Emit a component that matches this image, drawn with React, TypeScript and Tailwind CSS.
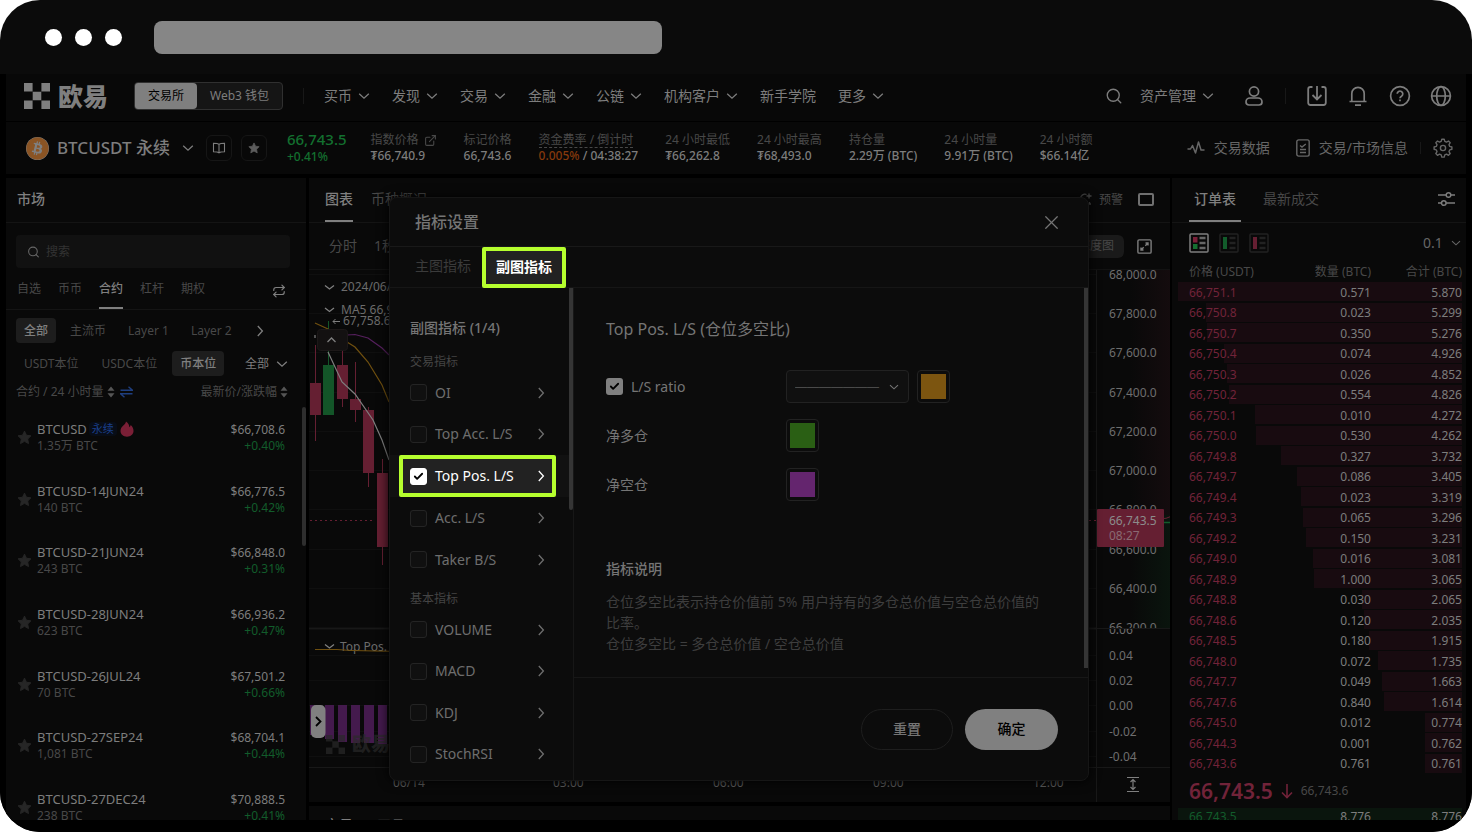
import React from "react";
import { Search, X, Repeat, Check, ExternalLink } from "lucide-react";
import { FaBitcoin } from "react-icons/fa";

const FONT = "font-['Noto_Sans','Noto_Sans_CJK_SC',sans-serif]";

const NAV = [
  { label: "买币", menu: true },
  { label: "发现", menu: true },
  { label: "交易", menu: true },
  { label: "金融", menu: true },
  { label: "公链", menu: true },
  { label: "机构客户", menu: true },
  { label: "新手学院", menu: false },
  { label: "更多", menu: true },
];

const STATS = [
  { label: "标记价格", value: "66,743.6" },
  { label: "资金费率 / 倒计时", value: "04:38:27", rate: "0.005%" },
  { label: "24 小时最低", value: "₮66,262.8" },
  { label: "24 小时最高", value: "₮68,493.0" },
  { label: "持仓量", value: "2.29万 (BTC)" },
  { label: "24 小时量", value: "9.91万 (BTC)" },
  { label: "24 小时额", value: "$66.14亿" },
];

const MARKETS = [
  { name: "BTCUSD", volume: "1.35万 BTC", price: "$66,708.6", change: "+0.40%", hot: true },
  { name: "BTCUSD-14JUN24", volume: "140 BTC", price: "$66,776.5", change: "+0.42%" },
  { name: "BTCUSD-21JUN24", volume: "243 BTC", price: "$66,848.0", change: "+0.31%" },
  { name: "BTCUSD-28JUN24", volume: "623 BTC", price: "$66,936.2", change: "+0.47%" },
  { name: "BTCUSD-26JUL24", volume: "70 BTC", price: "$67,501.2", change: "+0.66%" },
  { name: "BTCUSD-27SEP24", volume: "1,081 BTC", price: "$68,704.1", change: "+0.44%" },
  { name: "BTCUSD-27DEC24", volume: "238 BTC", price: "$70,888.5", change: "+0.41%" },
];

const ASKS: [string, string, string][] = [
  ["66,751.1", "0.571", "5.870"],
  ["66,750.8", "0.023", "5.299"],
  ["66,750.7", "0.350", "5.276"],
  ["66,750.4", "0.074", "4.926"],
  ["66,750.3", "0.026", "4.852"],
  ["66,750.2", "0.554", "4.826"],
  ["66,750.1", "0.010", "4.272"],
  ["66,750.0", "0.530", "4.262"],
  ["66,749.8", "0.327", "3.732"],
  ["66,749.7", "0.086", "3.405"],
  ["66,749.4", "0.023", "3.319"],
  ["66,749.3", "0.065", "3.296"],
  ["66,749.2", "0.150", "3.231"],
  ["66,749.0", "0.016", "3.081"],
  ["66,748.9", "1.000", "3.065"],
  ["66,748.8", "0.030", "2.065"],
  ["66,748.6", "0.120", "2.035"],
  ["66,748.5", "0.180", "1.915"],
  ["66,748.0", "0.072", "1.735"],
  ["66,747.7", "0.049", "1.663"],
  ["66,747.6", "0.840", "1.614"],
  ["66,745.0", "0.012", "0.774"],
  ["66,744.3", "0.001", "0.762"],
  ["66,743.6", "0.761", "0.761"],
];

const TRADE_INDICATORS = ["OI", "Top Acc. L/S", "Top Pos. L/S", "Acc. L/S", "Taker B/S"];
const BASIC_INDICATORS = ["VOLUME", "MACD", "KDJ", "StochRSI"];

function Down({ className }: { className: string }) {
  return (
    <svg viewBox="0 0 12 12" className={className} fill="none" stroke="currentColor" strokeWidth="1.3" aria-hidden="true">
      <path d="M1.200 3.800L6 8.200l4.800-4.400" />
    </svg>
  );
}

function Right({ className }: { className: string }) {
  return (
    <svg viewBox="0 0 12 12" className={className} fill="none" stroke="currentColor" strokeWidth="1.3" aria-hidden="true">
      <path d="M3.800 1L8.400 6l-4.600 5" />
    </svg>
  );
}

function LogoMark({ className }: { className: string }) {
  return (
    <svg viewBox="0 0 26 26" className={className} fill="currentColor" aria-hidden="true">
      <path d="M0 0h8.6v8.6H0zM17.4 0H26v8.6h-8.6zM8.7 8.7h8.6v8.6H8.7zM0 17.4h8.6V26H0zM17.4 17.4H26V26h-8.6z" />
    </svg>
  );
}

function Star({ className }: { className: string }) {
  return (
    <svg viewBox="0 0 16 16" className={className} fill="currentColor" stroke="currentColor" strokeLinejoin="round" strokeWidth="1" aria-hidden="true">
      <path d="M8 1.2l2.1 4.4 4.8.6-3.5 3.4.9 4.9L8 12.1l-4.3 2.400.9-4.900L1.100 6.200l4.800-.6z" />
    </svg>
  );
}

function SortArrows() {
  return (
    <svg viewBox="0 0 8 12" className="h-3 w-2" fill="#555" aria-hidden="true">
      <path d="M4 .5l3.5 4.3h-7zM4 11.5L.5 7.2h7z" />
    </svg>
  );
}

function BrowserBar() {
  return (
    <div className="flex h-[74px] shrink-0 items-center pl-[45px]">
      <div className="flex gap-[13px] pr-8">
        {[0, 1, 2].map((i) => (
          <span key={i} className="h-[17px] w-[17px] rounded-full bg-white" />
        ))}
      </div>
      <div className="h-[33px] w-[508px] rounded-lg bg-[#868686]" />
    </div>
  );
}

function TopNav() {
  return (
    <header className="flex h-[47px] shrink-0 items-center bg-[#080808] pr-[14px] pb-[3px] pl-[18px] text-sm text-[#7d7d7d]">
      <a href="#home" className="flex items-center gap-2 text-[#7f7f7f]">
        <LogoMark className="h-[26px] w-[26px]" />
        <span className="text-[25px] leading-[26px] font-black">欧易</span>
      </a>
      <div className="ml-[26px] flex h-[28px] w-[149px] overflow-hidden rounded border border-[#303030] bg-[#151515] text-xs">
        <button className="w-[62px] rounded-r-sm bg-[#7f7f7f] text-black">交易所</button>
        <button className="flex-1">Web3 钱包</button>
      </div>
      <span className="ml-5 h-4 w-px bg-[#181818]" />
      <nav className="ml-5 flex gap-[22px] whitespace-nowrap">
        {NAV.map((n) => (
          <a key={n.label} href="#nav" className="flex items-center gap-[6px] leading-5">
            {n.label}
            {n.menu && <Down className="h-3 w-3" />}
          </a>
        ))}
      </nav>
      <div className="ml-auto flex items-center whitespace-nowrap">
        <button aria-label="搜索">
          <Search className="h-[18px] w-[18px]" strokeWidth={1.8} />
        </button>
        <a href="#assets" className="ml-[17px] flex items-center gap-[6px]">
          资产管理 <Down className="h-3 w-3" />
        </a>
        <button aria-label="账户" className="ml-[30px]">
          <svg viewBox="0 0 20 22" className="h-[22px] w-5" fill="none" stroke="currentColor" strokeWidth="1.7">
            <circle cx="10" cy="6.5" r="4.6" />
            <path d="M6 13h8a4 4 0 0 1 4 4c0 2-1 3-3 3H5c-2 0-3-1-3-3a4 4 0 0 1 4-4z" />
          </svg>
        </button>
        <span className="mx-[21px] h-4 w-px bg-[#181818]" />
        <button aria-label="下载">
          <svg viewBox="0 0 20 22" className="h-[22px] w-5" fill="none" stroke="currentColor" strokeWidth="1.8">
            <path d="M5.500 2H3.500C2 2 1.200 2.800 1.200 4.200v13.600c0 1.400.8 2.200 2.300 2.200h13c1.500 0 2.300-.8 2.300-2.200V4.200C18.800 2.800 18 2 16.500 2h-2M10 1v13M5.500 10l4.500 4.400 4.500-4.400" />
          </svg>
        </button>
        <button aria-label="通知" className="ml-[21px]">
          <svg viewBox="0 0 20 22" className="h-[22px] w-5" fill="none" stroke="currentColor" strokeWidth="1.700">
            <path d="M3.800 16V8.500a6.200 6.200 0 0 1 12.400 0V16M1.500 16.500h17M7 20.200h6" />
          </svg>
        </button>
        <button aria-label="帮助" className="ml-[21px]">
          <svg viewBox="0 0 22 22" className="h-[22px] w-[22px]" fill="none" stroke="currentColor" strokeWidth="1.700">
            <circle cx="11" cy="11" r="9.400" />
            <path d="M8.200 8.800a2.800 2.800 0 1 1 4.300 2.400c-1 .6-1.500 1-1.500 2M11 14.400v1.800" />
          </svg>
        </button>
        <button aria-label="语言" className="ml-[19px]">
          <svg viewBox="0 0 22 22" className="h-[22px] w-[22px]" fill="none" stroke="currentColor" strokeWidth="1.700">
            <circle cx="11" cy="11" r="9.400" />
            <ellipse cx="11" cy="11" rx="4.300" ry="9.400" />
            <path d="M1.600 11h18.800" />
          </svg>
        </button>
      </div>
    </header>
  );
}

function Ticker() {
  return (
    <section className="flex h-[52px] shrink-0 items-center bg-[#080808] pr-[13px] pl-5 text-xs whitespace-nowrap text-[#7d7d7d]">
      <span className="rounded-full bg-[#7f7f7f]">
        <FaBitcoin className="h-[23px] w-[23px] text-[#8a5424]" />
      </span>
      <h1 className="ml-2 text-[17px] leading-6 font-medium">BTCUSDT 永续</h1>
      <Down className="ml-3 h-3 w-3" />
      <button aria-label="合约说明" className="ml-3 flex h-[26px] w-[26px] items-center justify-center rounded-md border border-[#161616]">
        <svg viewBox="0 0 14 12" className="h-3 w-[14px]" fill="none" stroke="currentColor" strokeWidth="1.100">
          <path d="M7 2.300C6 1.300 4.500 1.200 1.500 1.200v8.600c3 0 4.500.1 5.500 1 1-.9 2.500-1 5.500-1V1.200c-3 0-4.500.1-5.500 1.100zM7 2.300v8" />
        </svg>
      </button>
      <button aria-label="收藏" className="ml-[9px] flex h-[26px] w-[26px] items-center justify-center rounded-md border border-[#161616] text-[#5c5c5c]">
        <Star className="h-3 w-3" />
      </button>
      <div className="ml-5 text-[#13702f]">
        <div className="text-[15px] leading-[18px] font-medium">66,743.5</div>
        <div className="text-xs leading-[18px] font-medium">+0.41%</div>
      </div>
      <dl className="ml-6 flex gap-[27px] leading-4">
        <div>
          <dt className="flex items-center gap-[5px] text-[#484848]">
            指数价格 <ExternalLink className="h-[13px] w-[13px]" strokeWidth={2} />
          </dt>
          <dd className="font-medium">₮66,740.9</dd>
        </div>
        {STATS.map((s) => (
          <div key={s.label}>
            <dt className={s.rate ? "w-fit border-b border-dashed border-[#484848] leading-[15px] text-[#484848]" : "text-[#484848]"}>{s.label}</dt>
            <dd className="font-medium">
              {s.rate && <span className="text-[#85390c]">{s.rate}</span>}
              {s.rate && " / "}
              {s.value}
            </dd>
          </div>
        ))}
      </dl>
      <div className="ml-auto flex items-center text-sm text-[#666]">
        <a href="#data" className="flex items-center gap-[9px]">
          <svg viewBox="0 0 18 16" className="h-4 w-[18px]" fill="none" stroke="currentColor" strokeWidth="1.500">
            <path d="M.5 9h3l2-3.500 3 7.500 3-11 2.500 8h3.500" strokeLinejoin="round" />
          </svg>
          交易数据
        </a>
        <a href="#info" className="ml-[26px] flex items-center gap-[9px]">
          <svg viewBox="0 0 14 18" className="h-[18px] w-[14px]" fill="none" stroke="currentColor" strokeWidth="1.400">
            <rect x=".8" y=".9" width="12.400" height="16.200" rx="1.800" />
            <path d="M4 6.500l2 1.500 3.800-3M4 10.500h6M4 13.500h6" />
          </svg>
          交易/市场信息
        </a>
        <span className="ml-3 h-3 w-px bg-[#181818]" />
        <button aria-label="设置" className="ml-3">
          <svg viewBox="0 0 20 20" className="h-5 w-5" fill="none" stroke="currentColor" strokeWidth="1.400" strokeLinejoin="round">
            <circle cx="10" cy="10" r="2.600" />
            <path d="M8.800 1.200h2.400l.6 2.200 1.700.7 2-1.100 1.700 1.700-1.200 2 .7 1.700 2.200.6v2.300l-2.200.6-.7 1.700 1.200 2-1.700 1.700-2-1.100-1.700.7-.6 2.200H8.800l-.6-2.200-1.700-.7-2 1.100-1.700-1.700 1.200-2-.7-1.700-2.200-.6V9l2.200-.6.7-1.700-1.200-2 1.700-1.700 2 1.100 1.700-.7z" />
          </svg>
        </button>
      </div>
    </section>
  );
}

function MarketPanel() {
  return (
    <aside className="relative mr-[3px] flex w-[300px] shrink-0 flex-col overflow-hidden bg-[#090909] text-xs text-[#484848]">
      <h2 className="h-[45px] shrink-0 border-b border-[#141414] pl-[11px] text-sm leading-[42px] font-medium text-[#7f7f7f]">市场</h2>
      <label className="mt-3 mr-4 ml-[10px] flex h-[33px] shrink-0 items-center gap-[6px] rounded bg-[#111] pl-[11px] text-[#666]">
        <Search className="h-[14px] w-[14px]" strokeWidth={2} />
        <input aria-label="搜索" placeholder="搜索" className="w-full bg-transparent outline-none placeholder:text-[#333]" />
      </label>
      <div className="flex h-[42px] shrink-0 items-stretch gap-[17px] border-b border-[#141414] pr-5 pl-[11px]">
        {["自选", "币币", "合约", "杠杆", "期权"].map((t) => (
          <button key={t} className={t === "合约" ? "border-b-2 border-[#7f7f7f] pt-[3px] font-medium text-[#7f7f7f]" : "border-b-2 border-transparent pt-[3px]"}>
            {t}
          </button>
        ))}
        <button aria-label="切换" className="ml-auto pt-1 text-[#7f7f7f]">
          <Repeat className="h-[14px] w-[14px]" strokeWidth={2} />
        </button>
      </div>
      <div className="mt-2 ml-[10px] flex h-[25px] shrink-0 items-center gap-[6px]">
        {["全部", "主流币", "Layer 1", "Layer 2"].map((t) => (
          <button key={t} className={t === "全部" ? "h-[25px] rounded-sm bg-[#1d1d1d] px-2 font-medium text-[#7f7f7f]" : "h-[25px] px-2"}>
            {t}
          </button>
        ))}
        <button aria-label="更多分类" className="ml-2 text-[#7f7f7f]">
          <Right className="h-3 w-3" />
        </button>
      </div>
      <div className="mt-2 mr-[18px] ml-[10px] flex h-[25px] shrink-0 items-center gap-[7px]">
        {["USDT本位", "USDC本位", "币本位"].map((t) => (
          <button key={t} className={t === "币本位" ? "h-[25px] rounded-sm bg-[#1d1d1d] px-2 font-medium text-[#7f7f7f]" : "h-[25px] px-2"}>
            {t}
          </button>
        ))}
        <button className="ml-auto flex items-center gap-[7px] text-[#7f7f7f]">
          全部 <Down className="h-3 w-3" />
        </button>
      </div>
      <div className="mt-2 mr-[18px] ml-[10px] flex h-4 shrink-0 items-center">
        <span className="mr-[3px]">合约 / 24 小时量</span>
        <SortArrows />
        <svg viewBox="0 0 13 12" className="ml-[5px] h-3 w-[13px]" fill="none" stroke="#1f3f80" strokeWidth="1.400" aria-hidden="true">
          <path d="M.5 4.200h12L8.500.8M12.500 7.800H.5l4 3.400" />
        </svg>
        <span className="mr-[3px] ml-auto">最新价/涨跌幅</span>
        <SortArrows />
      </div>
      <ul>
        {MARKETS.map((m) => (
          <li key={m.name} className="flex h-[62px] items-center gap-[5px] pt-3 pr-[21px] pl-[11px] leading-4 nth-[3n]:h-[61px]">
            <Star className="h-[15px] w-[15px] text-[#262626]" />
            <div>
              <div className="flex items-center text-[13px] leading-[17px] text-[#7d7d7d]">
                {m.name}
                {m.hot && (
                  <>
                    <span className="ml-[2px] rounded-sm bg-[#080d17] px-[3px] text-[11px] leading-[14px] text-[#1a3f8a]">永续</span>
                    <svg viewBox="0 0 14 16" className="ml-[3px] h-4 w-[14px]" fill="#7a1f36" aria-hidden="true">
                      <path d="M6 .5c2.300 1.400 3.200 3.400 3.300 5.800.8-.5 1.200-1.200 1.400-2.200 1.900 1.700 2.800 3.600 2.800 5.900 0 3.400-2.800 5.700-6.500 5.700S.5 13.400.5 10c0-2.200 1-3.600 2.300-4.900C4.300 3.700 5.600 2.600 6 .5z" />
                    </svg>
                  </>
                )}
              </div>
              <div>{m.volume}</div>
            </div>
            <div className="ml-auto text-right">
              <div className="leading-[17px] text-[#7d7d7d]">{m.price}</div>
              <div className="text-[#125c2b]">{m.change}</div>
            </div>
          </li>
        ))}
      </ul>
      <span className="absolute top-[229px] right-0 h-[139px] w-1 rounded-full bg-[#2e2e2e]" />
    </aside>
  );
}

const CANDLES = [
  { x: 1, top: 113, bottom: 145, high: 75, low: 171, up: false },
  { x: 14, top: 95, bottom: 145, high: 51, low: 145, up: true },
  { x: 28, top: 95, bottom: 129, high: 80, low: 137, up: false },
  { x: 41, top: 129, bottom: 140, high: 92, low: 152, up: false },
  { x: 54, top: 140, bottom: 203, high: 137, low: 217, up: false },
  { x: 68, top: 203, bottom: 277, high: 189, low: 295, up: false },
];
const PRICE_LABELS = ["68,000.0", "67,800.0", "67,600.0", "67,400.0", "67,200.0", "67,000.0", "66,800.0", "66,600.0", "66,400.0", "66,200.0"];
const PRICE_Y = [4, 43, 82, 122, 161, 200, 239, 279, 318, 357];
const RATIO_LABELS = ["0.06", "0.04", "0.02", "0.00", "-0.02", "-0.04"];
const RATIO_Y = [359, 385, 410, 435, 461, 486];

function Plot() {
  return (
    <div className="min-w-0 flex-1 overflow-hidden">
      <svg width="100%" height="532" className="block text-xs" fill="none" aria-label="K 线图">
        {[...PRICE_Y, ...RATIO_Y].map((y, i) => (
          <path key={i} d={`M0 ${y + 0.5}H2000`} stroke="#0f0f0f" />
        ))}
        <path d="M0 358.500H2000M0 497.500H2000" stroke="#181818" />
        <path d="M1 250.500H66M780 250.500H790" stroke="#651f32" strokeDasharray="2 3" />
        {CANDLES.map((c) => (
          <g key={c.x} fill={c.up ? "#135528" : "#651f32"}>
            <rect x={c.x + 5} y={c.high} width="1" height={c.low - c.high} />
            <rect x={c.x} y={c.top} width="11" height={c.bottom - c.top} />
          </g>
        ))}
        <path d="M6 53L19 59 38 72 46 77 59 92 73 115 80 132" stroke="#70500f" strokeWidth="1.200" />
        <path d="M38 65L46 64.500 59 68 73 78 80 85" stroke="#56205e" strokeWidth="1.200" />
        <path d="M6 65v3M19 82L33 112 46 124 64 150 73 170 80 190" stroke="#7f7f7f" strokeWidth="1.200" />
        <rect x="8.500" y="59.500" width="30" height="21" rx="3" fill="#131111" stroke="#1c1818" />
        <g stroke="#7f7f7f" strokeWidth="1.300">
          <path d="M18.500 72l4-4 4 4M16 15.500l4.500 3.500 4.500-3.500M16 38l4.500 3.500L25 38M16 374.500l4.500 3.500 4.500-3.500" />
          <path d="M24 51.500h7M26.500 49l-2.500 2.500 2.500 2.500" strokeWidth="1" />
        </g>
        <g fill="#6c6c6c">
          <text x="32" y="21">2024/06/14</text>
          <text x="32" y="44">MA5 66,912.4</text>
          <text x="34" y="55">67,758.6</text>
          <text x="31" y="381">Top Pos. L/S</text>
        </g>
        <path d="M6 379.500h22L42 380.500l40 .8" stroke="#70500f" />
        <g fill="#441a4d">
          <rect x="1" y="435" width="10" height="30" />
          <rect x="16" y="435" width="9" height="34" />
          <rect x="29" y="435" width="9" height="37" />
          <rect x="42" y="435" width="9" height="38" />
          <rect x="55" y="435" width="10" height="38" />
          <rect x="69" y="435" width="9" height="39" />
        </g>
        <g fill="#2a2a2a" fillOpacity=".7">
          <path d="M17 465h6.500v6.500H17zM29.500 465H36v6.500h-6.500zM23.300 471.300h6.500v6.500h-6.500zM17 477.500h6.500v6.500H17zM29.500 477.500H36v6.500h-6.500z" />
          <text x="43" y="481" fontSize="19" fontWeight="900">欧易</text>
        </g>
        <rect x="2" y="435" width="14.500" height="33" rx="5" fill="#808080" />
        <path d="M7 447l4.500 4.500L7 456" stroke="#000" strokeWidth="1.800" />
        <g fill="#5e5e5e">
          {["06/14", "03:00", "06:00", "09:00", "12:00"].map((t, i) => (
            <text key={t} x={84 + i * 160} y="517">
              {t}
            </text>
          ))}
        </g>
      </svg>
    </div>
  );
}

function PriceAxis() {
  return (
    <svg width="74" height="532" className="block shrink-0 text-xs" fill="none" aria-label="价格轴">
      <defs>
        <linearGradient id="ask">
          <stop offset="0" stopColor="#651f32" stopOpacity="0" />
          <stop offset="1" stopColor="#651f32" stopOpacity=".12" />
        </linearGradient>
        <linearGradient id="bid">
          <stop offset="0" stopColor="#125c2b" stopOpacity="0" />
          <stop offset="1" stopColor="#125c2b" stopOpacity=".14" />
        </linearGradient>
        <clipPath id="price-pane">
          <rect width="74" height="358" />
        </clipPath>
        <clipPath id="ratio-pane">
          <rect y="359" width="74" height="140" />
        </clipPath>
      </defs>
      <rect x="34" y="0" width="40" height="245" fill="url(#ask)" />
      <rect x="34" y="245" width="40" height="113" fill="url(#bid)" />
      <path d="M.5 0V532M0 358.500H74M0 497.500H74" stroke="#181818" />
      <path d="M67 252.500h7" stroke="#125c2b" strokeWidth="1.500" />
      <path d="M67 248.500l3-.2 4-1.500" stroke="#651f32" />
      <g fill="#6e6e6e" clipPath="url(#price-pane)">
        {PRICE_LABELS.map((t, i) => (
          <text key={t} x="13" y={PRICE_Y[i] + 5}>
            {t}
          </text>
        ))}
      </g>
      <g fill="#6e6e6e" clipPath="url(#ratio-pane)">
        {RATIO_LABELS.map((t, i) => (
          <text key={t} x="13" y={RATIO_Y[i] + 5}>
            {t}
          </text>
        ))}
      </g>
      <rect x="1" y="239" width="67" height="38" rx="1" fill="#651f32" />
      <text x="13" y="255" fill="#8c8c8c">66,743.5</text>
      <text x="13" y="270" fill="#8a6a72">08:27</text>
      <path d="M31 507.500h12M31 521.500h12M37 509.500v10M34.500 512l2.500-2.500 2.500 2.500M34.500 517l2.500 2.500 2.500-2.500" stroke="#7f7f7f" strokeWidth="1.200" />
    </svg>
  );
}

function ChartPanel() {
  return (
    <main className="flex min-w-0 flex-1 flex-col gap-1 overflow-hidden text-sm text-[#484848]">
      <section className="flex flex-col bg-[#090909]">
        <div className="flex h-[45px] items-stretch border-b border-[#141414] px-4">
          <button className="border-b-2 border-[#7f7f7f] pb-px font-medium text-[#7f7f7f]">图表</button>
          <button className="ml-[18px] pb-[3px]">币种概况</button>
          <div className="ml-auto flex items-center gap-[7px] pb-px text-xs">
            <svg viewBox="0 0 14 14" className="h-[14px] w-[14px]" fill="none" stroke="currentColor" strokeWidth="1.300" aria-hidden="true">
              <path d="M8.500 1.500A4.500 4.500 0 0 0 2.500 6v5h9V9M1 11h12M11 .5v5M8.500 3h5" />
            </svg>
            <button>预警</button>
            <button aria-label="布局" className="ml-2 h-[13px] w-4 rounded-xs border-2 border-[#707070]" />
          </div>
        </div>
        <div className="flex h-[47px] items-center border-b border-[#121212] pr-[18px] pl-5">
          <button>分时</button>
          <button className="ml-[17px]">1秒</button>
          <button className="ml-auto h-[23px] rounded-md bg-[#1a1a1a] px-[10px] text-xs">深度图</button>
          <button aria-label="全屏" className="ml-[13px] text-[#7f7f7f]">
            <svg viewBox="0 0 15 15" className="h-[15px] w-[15px]" fill="none" stroke="currentColor" strokeWidth="1.400">
              <rect x=".9" y=".9" width="13.200" height="13.200" rx="1.200" />
              <path d="M8.500 4H11v2.500M11 4L8.300 6.700M4 8.500V11h2.500M4 11l2.700-2.700" />
            </svg>
          </button>
        </div>
        <div className="flex">
          <Plot />
          <PriceAxis />
        </div>
      </section>
      <section className="flex flex-1 items-start gap-6 overflow-hidden bg-[#090909] pt-[9px] pl-4 font-medium text-[#7f7f7f]">
        <button>交易</button>
        <button className="text-[#484848]">工具</button>
      </section>
    </main>
  );
}

function BookIcon({ kind }: { kind: "both" | "bid" | "ask" }) {
  const active = kind === "both";
  return (
    <svg viewBox="0 0 20 20" className="h-5 w-5" fill="none" aria-hidden="true">
      <rect x="1" y="1" width="18" height="18" rx="1" stroke={active ? "#7f7f7f" : "#222"} strokeWidth="1.500" />
      {kind === "both" ? (
        <>
          <path d="M4 4h4.500v5.500H4z" fill="#7a1f38" />
          <path d="M4 11h4.500v5H4z" fill="#157031" />
        </>
      ) : (
        <path d="M4 4h4v12H4z" fill={kind === "bid" ? "#125c2b" : "#651f32"} />
      )}
      <path d="M10.500 5h6M10.500 10h6M10.500 15h6" stroke={active ? "#666" : "#222"} strokeWidth="2.500" />
    </svg>
  );
}

function OrderBook() {
  return (
    <aside className="ml-[2px] flex w-[294px] shrink-0 flex-col overflow-hidden bg-[#090909] text-xs text-[#7d7d7d]">
      <div className="flex h-[45px] shrink-0 items-stretch border-b border-[#141414] pr-[11px] pl-[17px] text-sm">
        <button className="border-b-2 border-[#7f7f7f] px-[5px] pb-px font-medium text-[#7f7f7f]">订单表</button>
        <button className="ml-[22px] pb-[3px] text-[#484848]">最新成交</button>
        <button aria-label="筛选" className="ml-auto pb-[2px]">
          <svg viewBox="0 0 17 16" className="h-4 w-[17px]" fill="none" stroke="currentColor" strokeWidth="1.500">
            <circle cx="10.500" cy="4" r="2.300" />
            <circle cx="5.800" cy="12" r="2.300" />
            <path d="M0 4h8M13 4h4M0 12h3.300M8.200 12H17" />
          </svg>
        </button>
      </div>
      <div className="flex h-[39px] shrink-0 items-center gap-[10px] pr-[5px] pl-[17px]">
        <button aria-label="买卖盘"><BookIcon kind="both" /></button>
        <button aria-label="买盘"><BookIcon kind="bid" /></button>
        <button aria-label="卖盘"><BookIcon kind="ask" /></button>
        <label className="ml-auto flex items-center text-sm text-[#666]">
          <select aria-label="价格精度" className="w-7 appearance-none bg-transparent outline-none">
            <option>0.1</option>
          </select>
          <Down className="h-[10px] w-[10px]" />
        </label>
      </div>
      <table className="mr-1 ml-[6px] shrink-0 border-collapse leading-[18px]">
        <thead>
          <tr className="h-[20px] text-[#484848]">
            <th className="p-0 pl-[11px] text-left font-normal">价格 (USDT)</th>
            <th className="w-[90px] p-0 text-right font-normal">数量 (BTC)</th>
            <th className="w-[91px] p-0 text-right font-normal">合计 (BTC)</th>
          </tr>
        </thead>
        <tbody>
          {ASKS.map(([price, amount, total]) => (
            <tr
              key={price}
              className="h-[21px] bg-[linear-gradient(#180b10,#180b10)] bg-[position:right_top] bg-no-repeat even:h-5"
              style={{ backgroundSize: `${(Number(total) / 5.87) * 100}% 19px` }}
            >
              <td className="p-0 pl-[11px] text-[#712339]">{price}</td>
              <td className="p-0 text-right">{amount}</td>
              <td className="p-0 text-right">{total}</td>
            </tr>
          ))}
        </tbody>
      </table>
      <div className="flex h-[34px] shrink-0 items-center pl-[17px]">
        <strong className="text-[21px] leading-6 font-semibold text-[#712339]">66,743.5</strong>
        <svg viewBox="0 0 12 16" className="mx-2 h-4 w-3" fill="none" stroke="#712339" strokeWidth="1.600" aria-hidden="true">
          <path d="M6 1v13.500M1 9.500l5 5 5-5" />
        </svg>
        <span className="text-[#484848]">66,743.6</span>
      </div>
      <div className="mr-1 ml-[6px] flex h-5 shrink-0 bg-[#0a150d] pl-[11px] leading-[18px]">
        <span className="flex-1 text-[#125c2b]">66,743.5</span>
        <span className="w-[90px] text-right">8.776</span>
        <span className="w-[91px] text-right">8.776</span>
      </div>
    </aside>
  );
}

function IndicatorRow({ name }: { name: string }) {
  const selected = name === "Top Pos. L/S";
  return (
    <li className={selected ? "flex h-[42px] bg-[#111] pr-[17px] pl-[9px]" : "flex h-[42px] pr-[17px] pl-[9px] odd:h-[41px]"}>
      <label
        className={
          selected
            ? "flex flex-1 items-center rounded-xs border-4 border-[#b6ff2e] bg-[#222] px-[7px] text-white"
            : "flex flex-1 items-center border-x-4 border-transparent px-[7px] text-[#6e6e6e]"
        }
      >
        <span className="relative mr-2 h-[17px] w-[17px]">
          <input
            type="checkbox"
            defaultChecked={selected}
            className="block h-[17px] w-[17px] appearance-none rounded-[3px] border border-[#242424] bg-[#101010] checked:border-white checked:bg-white"
          />
          {selected && <Check className="absolute top-[3px] left-[3px] h-[11px] w-[11px] text-black" strokeWidth={4} />}
        </span>
        {name}
        <Right className="-mr-[2px] ml-auto h-3 w-3" />
      </label>
    </li>
  );
}

function Swatch({ label, className }: { label: string; className: string }) {
  return (
    <button aria-label={label} className="h-[33px] w-[33px] rounded border border-[#222] p-[3px]">
      <span className={className} />
    </button>
  );
}

function IndicatorModal() {
  return (
    <div className="absolute inset-x-0 top-[197px] flex justify-center pl-[6px]">
      <div role="dialog" aria-labelledby="modal-title" className="flex h-[584px] w-[700px] flex-col overflow-hidden rounded-lg border border-[#161616] bg-[#0c0c0c] text-sm text-[#757575] shadow-[0_0_12px_#000]">
        <div className="flex h-[49px] shrink-0 items-center border-b border-[#191919] pr-[25px] pl-[25px]">
          <h2 id="modal-title" className="text-base font-medium">指标设置</h2>
          <button aria-label="关闭" className="ml-auto">
            <X className="h-[23px] w-[23px]" strokeWidth={1.300} />
          </button>
        </div>
        <div className="flex h-[41px] shrink-0 border-b border-[#161616] pl-[25px]">
          <button className="pb-[2px] text-[#3b3b3b]">主图指标</button>
          <button className="ml-[11px] h-[41px] rounded-xs border-4 border-[#b6ff2e] bg-[#222] px-[10px] pb-[2px] font-bold text-white">副图指标</button>
        </div>
        <div className="flex min-h-0 flex-1">
          <div className="relative w-[184px] shrink-0 overflow-hidden border-r border-[#171717]">
            <h3 className="px-5 pt-[27px] leading-[26px] font-medium">副图指标 (1/4)</h3>
            <h4 className="px-5 pt-[10px] leading-[21px] text-xs text-[#444]">交易指标</h4>
            <ul className="text-sm">
              {TRADE_INDICATORS.map((n) => (
                <IndicatorRow key={n} name={n} />
              ))}
            </ul>
            <h4 className="px-5 pt-2 text-xs leading-[21px] text-[#444]">基本指标</h4>
            <ul>
              {BASIC_INDICATORS.map((n) => (
                <IndicatorRow key={n} name={n} />
              ))}
            </ul>
            <span className="absolute top-0 right-0 h-[222px] w-1 rounded-b-sm bg-[#353535]" />
          </div>
          <div className="relative flex min-w-0 flex-1 flex-col">
            <div className="flex-1 pt-[29px] pr-10 pl-8">
              <h3 className="text-base leading-6 font-normal">Top Pos. L/S (仓位多空比)</h3>
              <div className="mt-[29px] grid grid-cols-[180px_1fr] items-center gap-y-4">
                <label className="flex items-center">
                  <span className="relative mr-2 h-[17px] w-[17px]">
                    <input type="checkbox" defaultChecked className="block h-[17px] w-[17px] appearance-none rounded-[3px] bg-[#808080]" />
                    <Check className="absolute top-[3px] left-[3px] h-[11px] w-[11px] text-black" strokeWidth={4} />
                  </span>
                  L/S ratio
                </label>
                <div className="flex gap-2">
                  <div className="relative flex h-[33px] w-[123px] items-center rounded border border-[#222] bg-[#101010]">
                    <select aria-label="线型" className="h-full w-full appearance-none bg-transparent pl-2 font-['Liberation_Sans',sans-serif] text-xs text-[#4a4a4a] outline-none">
                      <option>———————</option>
                    </select>
                    <Down className="pointer-events-none absolute right-[9px] h-[10px] w-[10px]" />
                  </div>
                  <Swatch label="L/S ratio 颜色" className="block h-full w-full bg-[#7c5510]" />
                </div>
                <span>净多仓</span>
                <Swatch label="净多仓颜色" className="block h-full w-full bg-[#2a5f14]" />
                <span>净空仓</span>
                <Swatch label="净空仓颜色" className="block h-full w-full bg-[#64256e]" />
              </div>
              <h3 className="mt-[58px] leading-5 font-medium">指标说明</h3>
              <p className="mt-3 leading-[21px] text-[#3e3e3e]">
                仓位多空比表示持仓价值前 5% 用户持有的多仓总价值与空仓总价值的比率。
                <br />
                仓位多空比 = 多仓总价值 / 空仓总价值
              </p>
            </div>
            <div className="flex h-[103px] shrink-0 items-center justify-end gap-3 border-t border-[#171717] pr-[30px] font-medium">
              <button className="h-[41px] w-[92px] rounded-full border border-[#1e1e1e]">重置</button>
              <button className="h-[41px] w-[93px] rounded-full bg-[#808080] text-black">确定</button>
            </div>
            <span className="absolute top-0 right-0 h-[380px] w-1 bg-[#353535]" />
          </div>
        </div>
      </div>
    </div>
  );
}

export default function App() {
  return (
    <div className={`${FONT} h-screen bg-white`}>
      <div className="relative flex h-full flex-col overflow-hidden rounded-[40px] bg-[#0b0b0b]">
        <BrowserBar />
        <div className="flex min-h-0 flex-1 flex-col bg-black pr-[6px] pb-3 pl-[6px]">
          <TopNav />
          <div className="mt-px flex flex-col">
            <Ticker />
          </div>
          <div className="mt-1 flex min-h-0 flex-1">
            <MarketPanel />
            <ChartPanel />
            <OrderBook />
          </div>
        </div>
        <IndicatorModal />
      </div>
    </div>
  );
}
